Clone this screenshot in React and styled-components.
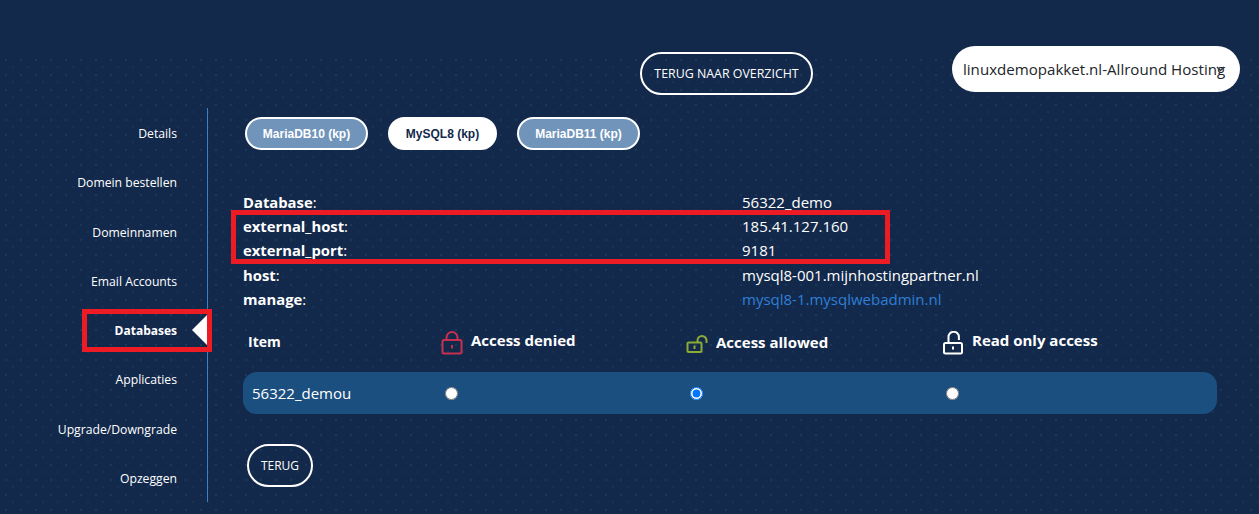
import React from 'react'
import styled, { createGlobalStyle } from 'styled-components'

const GlobalStyle = createGlobalStyle`
  html, body {
    margin: 0;
    padding: 0;
    background: #13294b;
  }
  *, *::before, *::after {
    box-sizing: border-box;
  }
`

const Page = styled.div`
  width: 1259px;
  height: 514px;
  overflow: hidden;
  color: #fff;
  font-family: "Open Sans", "Noto Sans", sans-serif;
  background-color: #13294b;
  background-image:
    linear-gradient(#13294b, #13294b),
    radial-gradient(circle at 1px 1px, #1f4060 0.6px, transparent 0.9px),
    radial-gradient(circle at 1px 1px, #1a3658 0.6px, transparent 0.9px);
  background-size: 100% 55px, 15px 15px, 15px 15px;
  background-position: 0 0, 5px 59px, 12px 66px;
  background-repeat: no-repeat, repeat, repeat;
`

const Header = styled.header`
  height: 108px;
  display: flex;
  align-items: flex-start;
  padding: 46px 19px 0 640px;
`

const BackButton = styled.button`
  height: 43px;
  width: 173px;
  margin-top: 6px;
  padding: 0;
  border: 2px solid #fff;
  border-radius: 22px;
  background: transparent;
  color: #fff;
  font-family: inherit;
  font-size: 12.4px;
  white-space: nowrap;
`

const SiteSelect = styled.div`
  position: relative;
  width: 288px;
  height: 46px;
  margin-left: auto;
  padding: 0 11px;
  display: flex;
  align-items: center;
  border-radius: 23px;
  background: #fff;
  color: #212529;
  font-size: 15.1px;
  white-space: nowrap;
  svg {
    position: absolute;
    right: 15px;
    top: 20px;
  }
`

const Body = styled.div`
  display: flex;
  align-items: flex-start;
`

const Sidebar = styled.nav`
  width: 208px;
  height: 394px;
  padding: 17px 30px 15px 0;
  border-right: 1px solid #3b7fc4;
  display: flex;
  flex-direction: column;
  justify-content: space-between;
  align-items: flex-end;
`

const SideLink = styled.a`
  position: relative;
  font-size: ${p => (p.$active ? 12 : 12.2)}px;
  line-height: 17px;
  color: #fff;
  font-weight: ${p => (p.$active ? 700 : 400)};
  white-space: nowrap;
  ${p => p.$active && `
    &::before {
      content: '';
      position: absolute;
      left: -33px;
      right: -35px;
      top: -13px;
      bottom: -13px;
      border: 5px solid #ed1c24;
    }
    &::after {
      content: '';
      position: absolute;
      right: -30px;
      top: -7px;
      border-style: solid;
      border-width: 15px 15px 15px 0;
      border-color: transparent #fff transparent transparent;
    }
  `}
`

const Content = styled.main`
  flex: 1;
  padding: 9px 42px 0 35px;
`

const Tabs = styled.div`
  display: flex;
  gap: 20px;
  padding-left: 2px;
`

const Tab = styled.button`
  height: 33px;
  width: ${p => (p.$active ? 109 : 123)}px;
  border: 2px solid #fff;
  border-radius: 17px;
  padding: 0;
  background: ${p => (p.$active ? '#fff' : '#7094ba')};
  color: ${p => (p.$active ? '#13294b' : '#fff')};
  font-family: "Liberation Sans", Arial, sans-serif;
  font-size: 12px;
  font-weight: 700;
`

const InfoList = styled.div`
  margin-top: 39.4px;
`

const InfoRow = styled.div`
  display: grid;
  grid-template-columns: 499px 1fr;
  height: 24.4px;
  align-items: center;
  font-size: 15px;
  line-height: 20px;
`

const InfoLabel = styled.span`
  font-size: 14.8px;
  font-weight: 700;
  span {
    font-weight: 400;
  }
`

const Highlight = styled.div`
  position: relative;
  &::after {
    content: '';
    position: absolute;
    left: -12px;
    top: -4px;
    width: 659px;
    height: 54px;
    border: 5px solid #ed1c24;
    pointer-events: none;
  }
`

const InfoLink = styled.a`
  color: #2e7fd6;
`

const AccessHead = styled.div`
  display: grid;
  grid-template-columns: 193px 245px 256px 1fr;
  height: 61px;
  align-items: start;
  padding: 19.6px 0 0 5px;
`

const ItemTitle = styled.span`
  font-size: 14px;
  line-height: 20px;
  font-weight: 700;
  padding-top: 1px;
`

const AccessTitle = styled.span`
  display: flex;
  align-items: flex-start;
  gap: 8px;
  font-size: 15px;
  line-height: 18px;
  font-weight: 700;
  padding-top: ${p => (p.$low ? 2 : 0)}px;
  svg {
    flex: none;
    margin-top: ${p => (p.$low ? 2 : 0)}px;
  }
`

const AccessRow = styled.div`
  display: grid;
  grid-template-columns: 193px 245px 256px 1fr;
  height: 42px;
  align-items: center;
  padding-left: 9px;
  border-radius: 14px;
  background: #1b4f80;
  font-size: 15px;
`

const RadioCell = styled.span`
  display: flex;
  align-items: center;
`

const Radio = styled.input.attrs({ type: 'radio' })`
  width: 13px;
  height: 13px;
  margin: 0;
`

const Footer = styled.div`
  margin-top: 30px;
  padding-left: 4px;
`

const PlainButton = styled.button`
  height: 43px;
  width: 66px;
  padding: 0;
  border: 2px solid #fff;
  border-radius: 22px;
  background: transparent;
  color: #fff;
  font-family: inherit;
  font-size: 12px;
`

const ClosedLock = () => (
  <svg width="22" height="24" viewBox="0 0 22 24" fill="none" stroke="#c8304f" strokeWidth="2">
    <rect x="1.5" y="9" width="19" height="13.5" rx="1.5" />
    <path d="M5.5 9V6.5a5.5 5.5 0 0 1 11 0V9" />
    <path d="M11 14v3.5" />
  </svg>
)

const ReadLock = () => (
  <svg width="22" height="24" viewBox="0 0 22 24" fill="none" stroke="#fff" strokeWidth="2">
    <rect x="2" y="12" width="18" height="10.5" rx="1.5" />
    <path d="M6.5 12V6a5.2 5.2 0 0 1 10.4 0v3" />
    <path d="M11 15.5v3" />
  </svg>
)

const OpenLock = () => (
  <svg width="22" height="18" viewBox="0 0 22 18" fill="none" stroke="#8cab35" strokeWidth="2">
    <rect x="1.5" y="7.5" width="14" height="9.5" rx="1" />
    <path d="M11.5 7.5V5.5a4.5 4.5 0 0 1 9 0v2.5" />
    <path d="M8.5 10.5v3.5" />
  </svg>
)

const menu = ['Details', 'Domein bestellen', 'Domeinnamen', 'Email Accounts', 'Databases', 'Applicaties', 'Upgrade/Downgrade', 'Opzeggen']

const App = () => {
  return (
    <Page>
      <GlobalStyle />
      <Header>
        <BackButton>TERUG NAAR OVERZICHT</BackButton>
        <SiteSelect>
          linuxdemopakket.nl-Allround Hosting
          <svg width="9" height="6" viewBox="0 0 9 6" fill="none" stroke="#343a40" strokeWidth="1.4">
            <path d="M1 1l3.5 3.5L8 1" />
          </svg>
        </SiteSelect>
      </Header>
      <Body>
        <Sidebar>
          {menu.map(item => (
            <SideLink key={item} $active={item === 'Databases'}>{item}</SideLink>
          ))}
        </Sidebar>
        <Content>
          <Tabs>
            <Tab>MariaDB10 (kp)</Tab>
            <Tab $active>MySQL8 (kp)</Tab>
            <Tab>MariaDB11 (kp)</Tab>
          </Tabs>
          <InfoList>
            <InfoRow>
              <InfoLabel>Database<span>:</span></InfoLabel>
              <span>56322_demo</span>
            </InfoRow>
            <Highlight>
              <InfoRow>
                <InfoLabel>external_host<span>:</span></InfoLabel>
                <span>185.41.127.160</span>
              </InfoRow>
              <InfoRow>
                <InfoLabel>external_port<span>:</span></InfoLabel>
                <span>9181</span>
              </InfoRow>
            </Highlight>
            <InfoRow>
              <InfoLabel>host<span>:</span></InfoLabel>
              <span>mysql8-001.mijnhostingpartner.nl</span>
            </InfoRow>
            <InfoRow>
              <InfoLabel>manage<span>:</span></InfoLabel>
              <InfoLink>mysql8-1.mysqlwebadmin.nl</InfoLink>
            </InfoRow>
          </InfoList>
          <AccessHead>
            <ItemTitle>Item</ItemTitle>
            <AccessTitle><ClosedLock />Access denied</AccessTitle>
            <AccessTitle $low><OpenLock />Access allowed</AccessTitle>
            <AccessTitle><ReadLock />Read only access</AccessTitle>
          </AccessHead>
          <AccessRow>
            <span>56322_demou</span>
            <RadioCell><Radio name="access" /></RadioCell>
            <RadioCell><Radio name="access" defaultChecked /></RadioCell>
            <RadioCell><Radio name="access" /></RadioCell>
          </AccessRow>
          <Footer>
            <PlainButton>TERUG</PlainButton>
          </Footer>
        </Content>
      </Body>
    </Page>
  )
}

export default App
